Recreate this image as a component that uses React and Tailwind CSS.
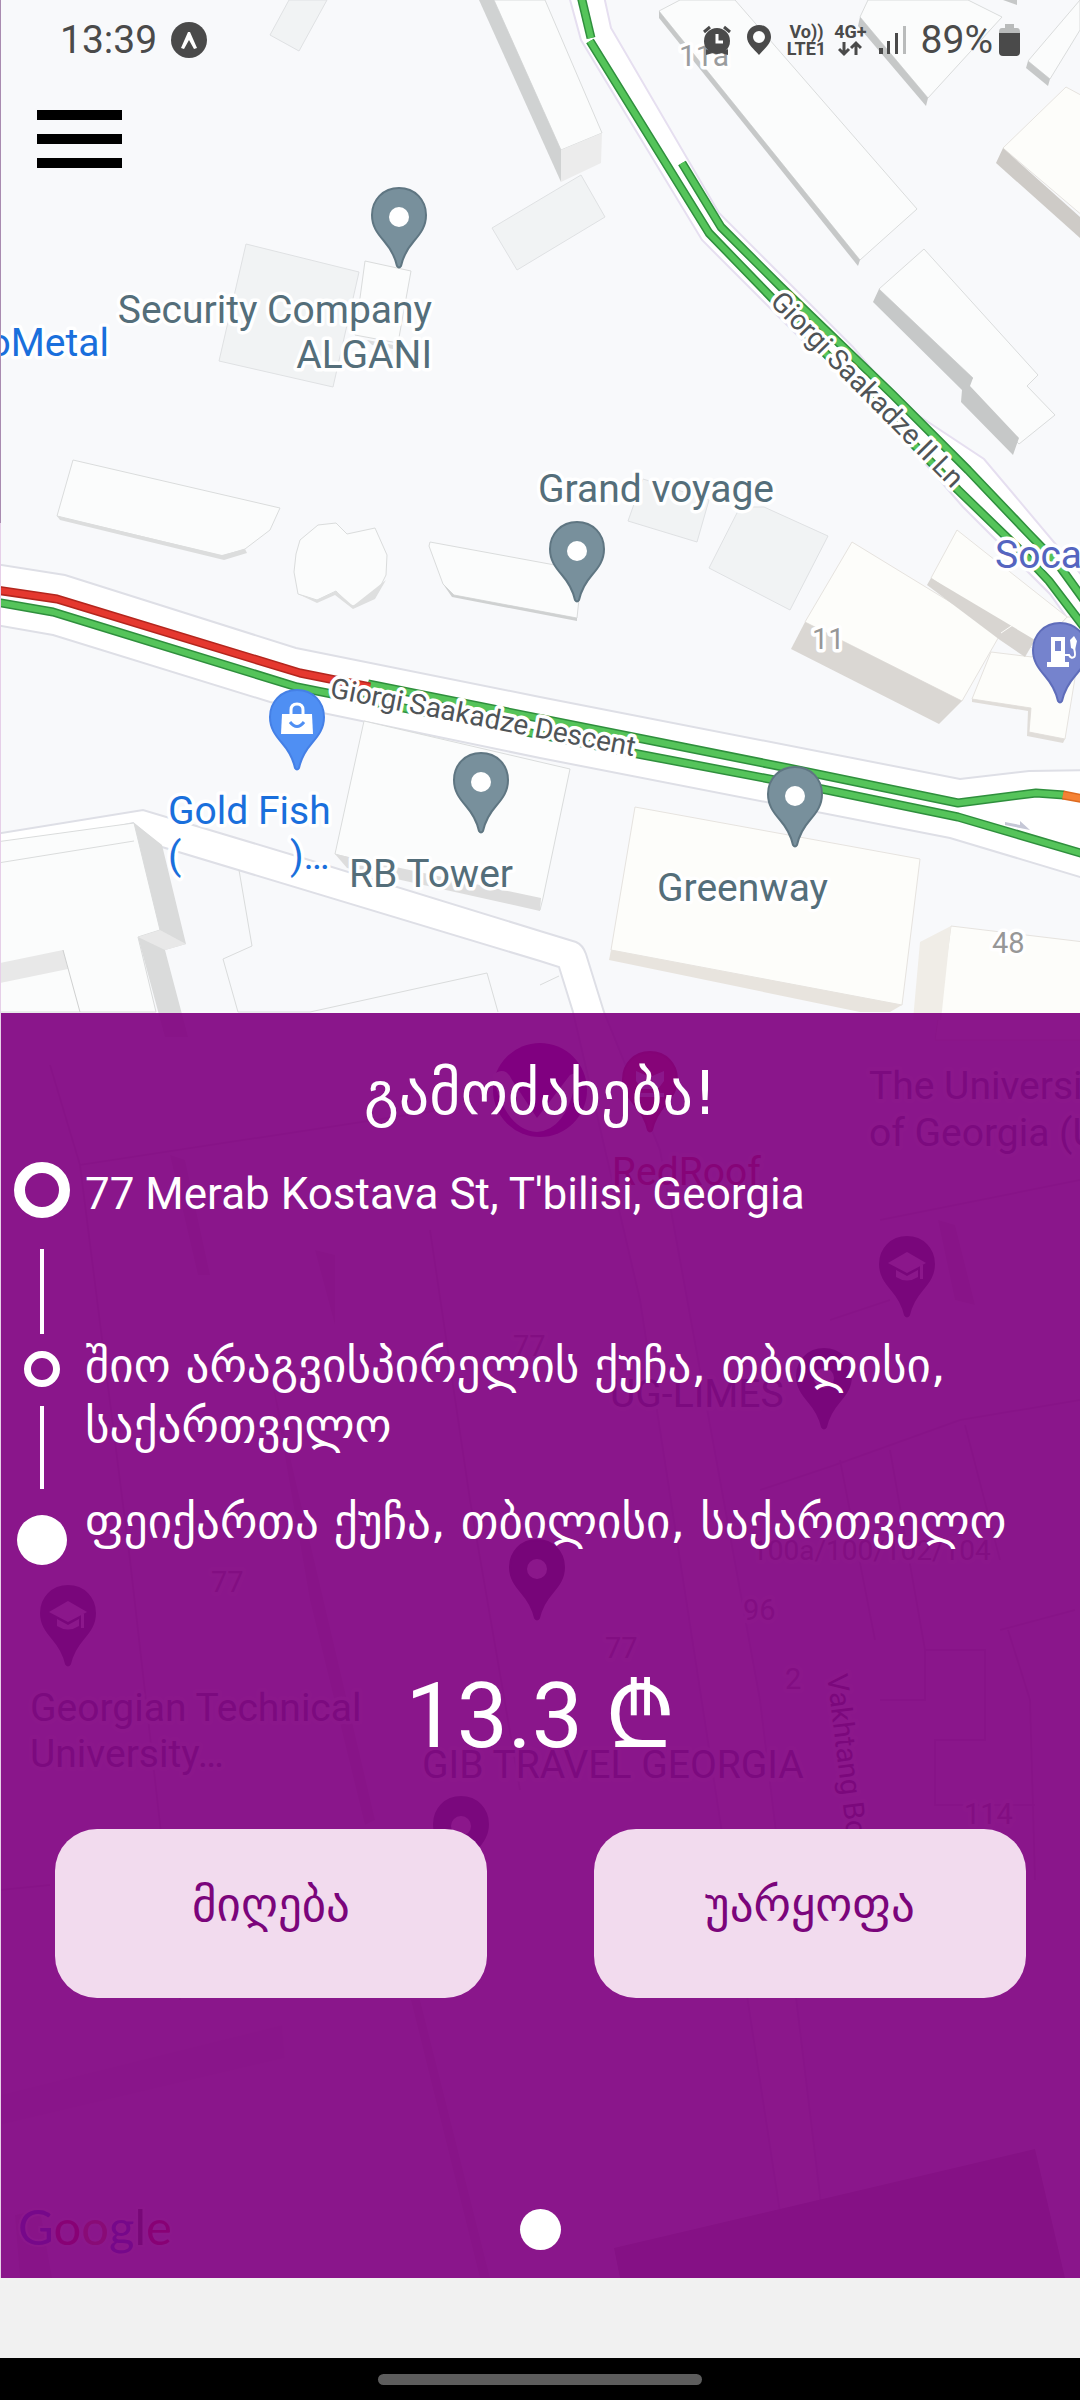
const GREY = "#78909c";

function Pin({ x, y, color = GREY, edge = "#5f7682", kind = "dot" }) {
  return (
    <g transform={`translate(${x} ${y})`}>
      <path
        d="M0 1C-16 1-27 13-27 28C-27 39-22 46-15 54C-8 62-4 70-2 79Q0 82 2 79C4 70 8 62 15 54C22 46 27 39 27 28C27 13 16 1 0 1Z"
        fill={color}
        stroke={edge}
        strokeWidth="2"
      />
      {kind === "dot" && <circle cx="0" cy="30" r="10" fill="#fff" />}
      {kind === "bag" && (
        <g>
          <path d="M-15 25H15L16 45H-16Z" fill="#fff" />
          <path d="M-6 26V21Q-6 15 0 15Q6 15 6 21V26" fill="none" stroke="#fff" strokeWidth="3" />
          <path d="M-7 33Q0 42 7 33" fill="none" stroke={color} strokeWidth="3" />
        </g>
      )}
      {kind === "fuel" && (
        <g>
          <path d="M-9 15H5V40H9V45H-13V40H-9ZM-5 19V29H1V19Z" fill="#fff" fillRule="evenodd" />
          <path d="M5 33H9Q11 37 14 35Q16 34 14 26" fill="none" stroke="#fff" strokeWidth="2" />
          <path d="M10 18L14 14L17 19L15 28L11 26Z" fill="#fff" />
        </g>
      )}
      {kind === "cap" && (
        <g fill="#fff">
          <path d="M-19 27L0 16L19 27L0 37Z" />
          <path d="M-11 34L0 40L11 34V41Q0 48-11 41Z" />
          <path d="M13 29H16V43H13Z" />
        </g>
      )}
      {kind === "bed" && <path d="M-14 20L0 26L14 20V30L8 38H-8L-14 30ZM-14 42H14V46H-14Z" fill="#fff" />}
    </g>
  );
}

function Label({ x, y, size = 39, color = "#546e7a", anchor = "start", rotate = 0, children }) {
  return (
    <text
      transform={`translate(${x} ${y}) rotate(${rotate})`}
      fontSize={size}
      fill={color}
      textAnchor={anchor}
      stroke="#fff"
      strokeWidth="7"
      strokeLinejoin="round"
      paintOrder="stroke"
    >
      {children}
    </text>
  );
}

function Traffic({ points, color, edge, width = 8 }) {
  return (
    <g fill="none" strokeLinejoin="round">
      <polyline points={points} stroke={edge} strokeWidth={width + 1} />
      <polyline points={points} stroke={color} strokeWidth={width - 2} />
    </g>
  );
}

const GREEN = { color: "#55c45a", edge: "#2f8f3d" };

function CityMap() {
  return (
    <svg
      className="absolute inset-0 h-full w-full font-['Roboto',sans-serif]"
      viewBox="0 0 1080 2278"
      preserveAspectRatio="xMidYMin slice"
      role="img"
      aria-label="Map"
    >
      <rect width="1080" height="2278" fill="#f8f9fb" />

      {/* flat lots */}
      <g fill="#f1f3f4" stroke="#dfe1e3" strokeWidth="1">
        <path d="M289 0L270 35L299 51L327 0Z" />
        <path d="M246 244L359 272L333 387L219 361Z" />
        <path d="M492 228L517 270L605 217L581 175Z" />
        <path d="M740 507L709 568L790 610L828 536L764 507Z" />
        <path d="M643 479L628 521L697 542L709 500Z" />
      </g>

      {/* roads */}
      <g fill="#fff" stroke="#dedfe6" strokeWidth="2">
        <path d="M-4 834L143 810L293 855L540 931L576 942Q583 945 586 954L604 1012L660 1150L760 1700L830 2278H790L740 1950L640 1300L573 1012L559 967L540 961L162 847L133 823L-4 853Z" />
        <path d="M569 -4L581 40L702 240L802 340L850 377L963 507L1050 594L1090 650V585L984 459L901 404L853 347L719 213L611 28L604 -4Z" stroke="#e6dff0" />
        <path d="M-4 564L65 575L296 648L540 697L960 779L1029 771L1090 770V880L950 838L540 758L270 702L53 635L-4 625Z" />
      </g>

      {/* white buildings */}
      <g fill="#fbfcfc" stroke="#dadcdc" strokeWidth="1">
        <path d="M365 261L411 271L398 343L355 335Z" />
        <path d="M494 0L561 150L602 133L545 0Z" />
        <path d="M659 11L680 0H735L917 209L860 260Z" />
        <path d="M860 17L868 0H968L1002 17L928 98Z" />
        <path d="M1028 61L1080 0V30L1050 79Z" />
        <path d="M879 289L924 249L1038 375L1027 386L1055 415L1019 444L977 400L962 388L973 378Z" />
        <path d="M73 460L280 508L270 530L245 549L222 556L57 516Z" />
        <path d="M296 554L300 540L318 525L336 523L347 534L375 528L387 555L386 575L375 597L353 606L345 602L336 591L317 600L298 594L294 572Z" />
        <path d="M430 542L582 570L577 618L454 595L443 584L429 546Z" />
        <path d="M364 721L570 769L543 898L540 910L335 854Z" />
        <path d="M-4 842L134 823L160 930L138 937L156 1012H-4Z" />
        <path d="M239 870L252 946L223 959L238 1012L310 1012L487 973L498 1012" fill="none" />
        <path d="M-2 863L134 841M540 985L559 976" fill="none" />
      </g>

      {/* beige buildings */}
      <g fill="#fdfdfa" stroke="#e6e3df" strokeWidth="1">
        <path d="M1003 148L1066 87L1090 100V222Z" />
        <path d="M957 530L1067 617L1035 650L931 578Z" />
        <path d="M852 542L1001 633L962 701L805 622Z" />
        <path d="M991 652L1032 657L1067 617H1085L1065 739L1029 732L1031 708L972 699Z" />
        <path d="M635 807L920 859L902 1005L611 950Z" />
        <path d="M951 926L1084 942V1040H935Z" />
      </g>

      {/* shaded walls */}
      <g fill="#c6c8c8">
        <path d="M479 0H494L561 150V182Z" fill="#d0d2d2" />
        <path d="M561 150L602 133L601 163L561 182Z" fill="#ececec" />
        <path d="M659 11L860 260L858 266L659 18Z" />
        <path d="M860 17L928 98L926 106L858 26Z" />
        <path d="M1028 61L1050 79L1048 86L1026 68Z" />
        <path d="M1003 0H1017V5Z" />
        <path d="M879 289L973 378L970 386L1019 438L1013 455L961 402L962 390L873 302Z" />
        <path d="M57 516L222 555L245 549L247 553L224 560L60 520Z" fill="#dcdddd" />
        <path d="M443 584L454 595L577 618V621L452 597Z" fill="#cfd1d1" />
        <path d="M298 594L317 600L336 591L353 606L386 580L375 599L353 609L335 595L317 603Z" fill="#dedfdf" />
        <path d="M335 854L541 898L540 911L347 868Z" fill="#dddddd" />
        <path d="M367 340L393 345V349L372 345Z" fill="#dddddd" />
        <path d="M134 823L162 845L186 944L165 950L188 1037H165L138 937L160 930Z" fill="#dadbdb" />
        <path d="M138 937L160 930L186 944L165 950Z" fill="#e8e8e8" />
        <path d="M0 963L63 950L68 969L0 983Z" fill="#e8e8e8" />
      </g>
      <path d="M63 950L80 1012" stroke="#cfd0d0" fill="none" />
      <path d="M1003 148L1080 217V238L996 163Z" fill="#cecbc7" />
      <path d="M931 578L1035 640L1025 657L1000 640L927 585Z" fill="#d8d5d1" />
      <path d="M1001 633L1035 610" stroke="#fdfdfa" />
      <path d="M805 622L962 701L939 724L791 649Z" fill="#dad7d3" />
      <path d="M972 699L1031 708L1029 732L1065 739L1063 743L1027 736L1028 711L972 702Z" fill="#e0ddd9" />
      <path d="M611 950L902 1005L890 1012H860L609 960Z" fill="#e8e4de" />
      <path d="M951 926L941 1020H913L920 942Z" fill="#f0ede7" />

      {/* blocks below the call sheet */}
      <g fill="none" stroke="#d6d8da" strokeWidth="2">
        <path d="M50 1065L80 1165L440 1110M80 1165L130 1560L180 2000" />
        <path d="M430 1230L470 1500L520 1790M880 1220L1080 1180M890 1300L830 1320" />
        <path d="M760 1490L835 1465L960 1420L1080 1400M965 1425L1000 1560M890 1450L925 1650M840 1460L875 1640" />
        <path d="M1000 1630L1075 1610M880 1700H925V1650H985V1740H935V1805H1035M1035 1880L1030 1700L1008 1630M0 1890L50 1885" />
      </g>
      <g fill="#dcdedf">
        <path d="M170 1155L185 1160L210 1275H198ZM315 1250L335 1255V1325ZM270 1370L300 1500L375 1820L365 1825L310 1600Z" />
        <path d="M938 1220L955 1225L975 1305L955 1300Z" />
        <path d="M411 2000H420L490 2278H480Z" />
        <path d="M0 2095L282 2025L285 2058L0 2125Z" fill="#eceeef" />
        <path d="M614 2248L1035 2149L1065 2278H620Z" fill="#b8babb" />
        <path d="M15 2215L40 2210L52 2278H20Z" />
      </g>

      {/* live traffic */}
      <Traffic points="581,-4 591,38" {...GREEN} />
      <Traffic points="590,41 709,233 771,297 958,490 1020,550 1049,581 1084,627" {...GREEN} />
      <Traffic points="682,163 721,227 781,287 893,395 968,470 1028,533 1058,564 1084,600" {...GREEN} />
      <Traffic points="-4,602 53,612 297,687 327,693 643,755 822,789 958,817 1084,854" {...GREEN} />
      <Traffic points="368,684 643,739 788,768 958,803 1036,793 1064,795" {...GREEN} />
      <Traffic points="-4,590 57,599 300,673 370,687" color="#e5382f" edge="#b3261e" />
      <Traffic points="1063,795 1084,799" color="#f58234" edge="#dd6a20" />
      <path d="M1005 822L1020 825V821L1030 830L1005 825Z" fill="#c5c7d6" />

      <Label x={769} y={303} size={28} color="#4f5457" rotate={45.5}>Giorgi Saakadze II Ln</Label>
      <Label x={329} y={697} size={28} color="#4f5457" rotate={11}>Giorgi Saakadze Descent</Label>
      <Label x={679} y={66} size={30} color="#9a9c9e">11a</Label>
      <Label x={812} y={649} size={29} color="#979797">11</Label>
      <Label x={992} y={953} size={29} color="#979797">48</Label>

      <Pin x={399} y={187} />
      <Pin x={577} y={521} />
      <Pin x={481} y={752} />
      <Pin x={795} y={766} />
      <Pin x={297} y={689} color="#4f8ff3" edge="#4580e6" kind="bag" />
      <Pin x={1060} y={622} color="#7583cd" edge="#5f6dba" kind="fuel" />

      <Label x={432} y={323} anchor="end">Security Company</Label>
      <Label x={432} y={368} anchor="end">ALGANI</Label>
      <Label x={109} y={356} anchor="end" color="#1a6fdc">oMetal</Label>
      <Label x={538} y={502}>Grand voyage</Label>
      <Label x={168} y={824} color="#1a6fdc">Gold Fish</Label>
      <Label x={168} y={869} color="#1a6fdc">(</Label>
      <Label x={290} y={869} color="#1a6fdc">)…</Label>
      <Label x={349} y={887}>RB Tower</Label>
      <Label x={657} y={901}>Greenway</Label>
      <Label x={995} y={568} color="#5565c0">Soca</Label>

      <circle cx="540" cy="1090" r="47" fill="#800080" />
      <path d="M493 1075Q505 1065 512 1080L537 1118L570 1075Q580 1070 575 1085Q565 1130 537 1132Q505 1130 493 1075Z" fill="#fff" />
      <Pin x={650} y={1051} color="#c62828" edge="#b02020" kind="bed" />
      <Pin x={907} y={1236} color="#37474f" edge="#37474f" kind="cap" />
      <Pin x={824} y={1348} color="#37474f" edge="#37474f" />
      <Pin x={537} y={1539} color="#263238" edge="#263238" />
      <Pin x={68} y={1585} color="#37474f" edge="#37474f" kind="cap" />
      <Pin x={461} y={1796} color="#455a64" edge="#455a64" />
      <Label x={869} y={1099}>The Universi</Label>
      <Label x={869} y={1146}>of Georgia (U</Label>
      <Label x={612} y={1185} color="#c62828">RedRoof</Label>
      <Label x={610} y={1407}>UG-LIMES</Label>
      <Label x={30} y={1721}>Georgian Technical</Label>
      <Label x={30} y={1767}>University…</Label>
      <Label x={422} y={1778}>GIB TRAVEL GEORGIA</Label>
      <Label x={513} y={1356} size={29} color="#979797">77</Label>
      <Label x={211} y={1592} size={29} color="#979797">77</Label>
      <Label x={605} y={1658} size={29} color="#979797">77</Label>
      <Label x={743} y={1620} size={29} color="#979797">96</Label>
      <Label x={785} y={1689} size={29} color="#979797">2</Label>
      <Label x={964} y={1824} size={29} color="#979797">114</Label>
      <Label x={752} y={1560} size={28} color="#979797">100a/100/102/104</Label>
      <Label x={827} y={1675} size={29} color="#4f5457" rotate={83}>Vakhtang Bochorishvili</Label>
      <text x="18" y="2245" fontSize="49" stroke="#fff" strokeWidth="4" paintOrder="stroke" className="font-['Lato',sans-serif]">
        <tspan fill="#1a56f0">G</tspan>
        <tspan fill="#e01010">o</tspan>
        <tspan fill="#e8781a">o</tspan>
        <tspan fill="#1a56f0">g</tspan>
        <tspan fill="#2a5a30">l</tspan>
        <tspan fill="#e01010">e</tspan>
      </text>

      <rect width="1" height="523" fill="#a98bb0" />
      <rect y="523" width="1" height="1755" fill="#e6cfe8" />
    </svg>
  );
}

function StatusBar() {
  return (
    <header className="relative flex h-20 items-center pr-[60px] pl-[60px] text-[39px] leading-none text-[#4a4a4a]">
      <time>13:39</time>
      <svg className="ml-[14px] size-9" viewBox="0 0 36 36" aria-hidden="true">
        <circle cx="18" cy="18" r="18" fill="#4a4a4a" />
        <path d="M10 26L17 10H19L26 26L23 27L18 18L13 27Z" fill="#fff" />
      </svg>
      <div className="ml-auto flex items-center">
        <svg className="h-[30px] w-7" viewBox="0 0 28 30" aria-hidden="true">
          <g fill="#4a4a4a">
            <circle cx="14" cy="16" r="13" />
            <path d="M3 24V30L10 28ZM25 24V30L18 28Z" />
          </g>
          <path d="M1 7L7 2M27 7L21 2" stroke="#4a4a4a" strokeWidth="3" />
          <path d="M14 9V17H20" fill="none" stroke="#fff" strokeWidth="3" />
        </svg>
        <svg className="ml-4 h-[30px] w-6" viewBox="0 0 24 30" aria-hidden="true">
          <path d="M12 0C5 0 0 5 0 12C0 19 7 24 12 30C17 24 24 19 24 12C24 5 19 0 12 0ZM12 6A6 6 0 1 1 12 18A6 6 0 1 1 12 6Z" fill="#4a4a4a" fillRule="evenodd" />
        </svg>
        <div className="ml-4 flex flex-col items-center text-[18px] leading-[17px] font-bold">
          <span>Vo))</span>
          <span>LTE1</span>
        </div>
        <div className="ml-2 flex flex-col items-center text-[18px] leading-[17px] font-bold">
          <span>4G+</span>
          <svg className="h-[17px] w-6" viewBox="0 0 24 17" aria-hidden="true">
            <path d="M6 2V14M1 9L6 14L11 9M18 15V3M13 8L18 3L23 8" fill="none" stroke="#4a4a4a" strokeWidth="3" />
          </svg>
        </div>
        <svg className="ml-3 h-7 w-7" viewBox="0 0 28 28" aria-hidden="true">
          <path d="M0 22H4V28H0ZM8 15H11V28H8ZM16 7H19V28H16Z" fill="#4a4a4a" />
          <path d="M24 0H27V28H24Z" fill="#b9bbbb" />
        </svg>
        <span className="ml-[14px]">89%</span>
        <svg className="ml-[6px] h-8 w-[21px]" viewBox="0 0 21 32" aria-hidden="true">
          <path d="M6 0H15V4H18Q21 4 21 8V10H0V8Q0 4 3 4H6Z" fill="#b9bbbb" />
          <path d="M0 9H21V28Q21 32 17 32H4Q0 32 0 28Z" fill="#4a4a4a" />
        </svg>
      </div>
    </header>
  );
}

function CallSheet() {
  return (
    <section className="relative mt-auto ml-px flex flex-col bg-[#800080]/91 pt-10 pb-7 text-white">
      <h1 className="text-center font-['DejaVu_Sans',sans-serif] text-[60px] leading-20">გამოძახება!</h1>

      <div className="mt-[29px] flex">
        <div className="flex w-[82px] shrink-0 flex-col items-center" aria-hidden="true">
          <span className="size-14 rounded-full border-[11px] border-white" />
          <span className="mt-[31px] h-[85px] w-1 bg-white" />
          <span className="mt-[17px] size-9 rounded-full border-[7px] border-white" />
          <span className="mt-[19px] h-[83px] w-1 bg-white" />
          <span className="mt-[26px] size-[50px] rounded-full bg-white" />
        </div>
        <ol className="min-w-0 flex-1 pt-[2px] pr-8 pl-[2px] leading-[60px]">
          <li className="text-[44px]">77 Merab Kostava St, T'bilisi, Georgia</li>
          <li className="mt-[112px] font-['DejaVu_Sans',sans-serif] text-[47px]">
            შიო არაგვისპირელის ქუჩა, თბილისი, საქართველო
          </li>
          <li className="mt-9 font-['DejaVu_Sans',sans-serif] text-[47px]">
            ფეიქართა ქუჩა, თბილისი, საქართველო
          </li>
        </ol>
      </div>

      <p className="mt-[101px] text-center text-[91px] leading-[100px]">13.3 ₾</p>

      <div className="mt-[63px] grid grid-cols-2 gap-[11%] px-[5%]">
        <button type="button" className="h-[169px] rounded-[42px] bg-[#f2dbee] pb-4 font-['DejaVu_Sans',sans-serif] text-[47px] text-[#7b057b]">
          მიღება
        </button>
        <button type="button" className="h-[169px] rounded-[42px] bg-[#f2dbee] pb-4 font-['DejaVu_Sans',sans-serif] text-[47px] text-[#7b057b]">
          უარყოფა
        </button>
      </div>

      <span className="mt-[211px] size-[41px] self-center rounded-full bg-white" />
    </section>
  );
}

export default function App() {
  return (
    <div className="flex min-h-screen flex-col bg-[#f1f1f1] font-['Roboto','DejaVu_Sans',sans-serif]">
      <main className="relative flex flex-1 flex-col overflow-hidden">
        <CityMap />
        <StatusBar />
        <button type="button" aria-label="Menu" className="relative mt-[30px] mb-40 ml-[37px] flex w-[85px] flex-col gap-[14px]">
          <span className="h-[10px] w-full bg-black" />
          <span className="h-[10px] w-full bg-black" />
          <span className="h-[10px] w-full bg-black" />
        </button>
        <CallSheet />
      </main>
      <div className="h-20" />
      <footer className="flex h-[42px] items-center justify-center bg-black">
        <span className="h-[11px] w-[30%] rounded-full bg-[#5d5d5d]" />
      </footer>
    </div>
  );
}
